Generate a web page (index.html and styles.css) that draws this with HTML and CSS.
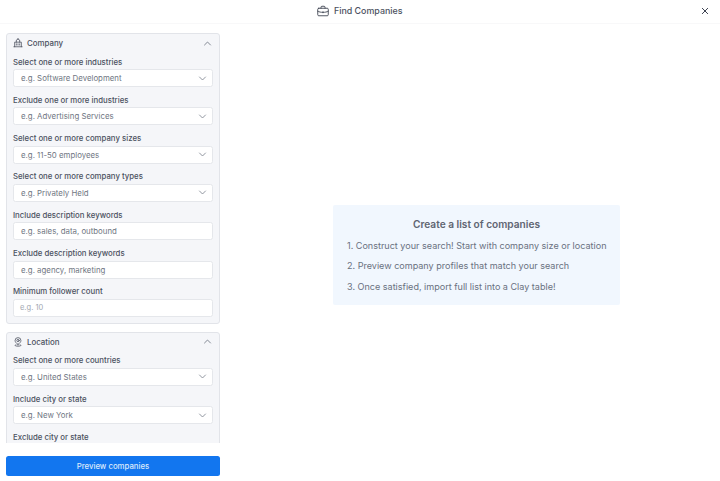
FILE: index.html
```html
<!DOCTYPE html>
<html lang="en">
<head>
<meta charset="utf-8">
<title>Find Companies</title>
<link rel="stylesheet" href="styles.css">
</head>
<body>
<div class="app">
  <header class="topbar">
    <div class="title">
      <svg class="title-icon" viewBox="0 0 24 24" fill="none" stroke="currentColor" stroke-width="1.800" stroke-linejoin="round" stroke-linecap="round"><rect x="1.500" y="6.500" width="21" height="15" rx="2"/><path d="M8 6.500V4.500a2 2 0 0 1 2-2h4a2 2 0 0 1 2 2v2"/><path d="M1.500 12.500c3 1.600 6.500 2.200 10.500 2.200s7.500-.6 10.500-2.200"/><path d="M12 13.500v2"/></svg>
      <span>Find Companies</span>
    </div>
    <button class="close" aria-label="Close"><svg viewBox="0 0 12 12" fill="none" stroke="currentColor" stroke-width="1.500" stroke-linecap="round"><path d="M2 2l8 8M10 2l-8 8"/></svg></button>
  </header>
  <main class="content">
    <aside class="sidebar">
      <div class="scroll">
        <section class="card">
          <div class="card-head">
            <svg class="card-icon" viewBox="0 0 24 24" fill="none" stroke="currentColor" stroke-width="1.800" stroke-linejoin="round" stroke-linecap="round"><path d="M2 21h20"/><path d="M4 21V10h16v11"/><path d="M8 10V5l4-2.500L16 5v5"/><path d="M12 2.500V1"/><path d="M8 14v3M12 14v3M16 14v3"/></svg>
            <span class="card-title">Company</span>
            <svg class="chev-up" viewBox="0 0 12 12" fill="none" stroke="currentColor" stroke-width="1.100" stroke-linecap="round" stroke-linejoin="round"><path d="M2 8l4-4 4 4"/></svg>
          </div>
          <div class="field"><label>Select one or more industries</label><div class="control"><span>e.g. Software Development</span><svg class="chev" viewBox="0 0 12 12" fill="none" stroke="currentColor" stroke-width="1.100" stroke-linecap="round" stroke-linejoin="round"><path d="M2 4l4 4 4-4"/></svg></div></div>
          <div class="field"><label>Exclude one or more industries</label><div class="control"><span>e.g. Advertising Services</span><svg class="chev" viewBox="0 0 12 12" fill="none" stroke="currentColor" stroke-width="1.100" stroke-linecap="round" stroke-linejoin="round"><path d="M2 4l4 4 4-4"/></svg></div></div>
          <div class="field"><label>Select one or more company sizes</label><div class="control"><span>e.g. 11-50 employees</span><svg class="chev" viewBox="0 0 12 12" fill="none" stroke="currentColor" stroke-width="1.100" stroke-linecap="round" stroke-linejoin="round"><path d="M2 4l4 4 4-4"/></svg></div></div>
          <div class="field"><label>Select one or more company types</label><div class="control"><span>e.g. Privately Held</span><svg class="chev" viewBox="0 0 12 12" fill="none" stroke="currentColor" stroke-width="1.100" stroke-linecap="round" stroke-linejoin="round"><path d="M2 4l4 4 4-4"/></svg></div></div>
          <div class="field"><label>Include description keywords</label><div class="control"><span>e.g. sales, data, outbound</span></div></div>
          <div class="field"><label>Exclude description keywords</label><div class="control"><span>e.g. agency, marketing</span></div></div>
          <div class="field"><label>Minimum follower count</label><div class="control number"><span>e.g. 10</span></div></div>
        </section>
        <section class="card">
          <div class="card-head">
            <svg class="card-icon" viewBox="0 0 24 24" fill="none" stroke="currentColor" stroke-width="1.800" stroke-linejoin="round" stroke-linecap="round"><path d="M12 18c-4-3-7-6-7-9.500a7 7 0 0 1 14 0C19 12 16 15 12 18z"/><circle cx="12" cy="8.500" r="2.800"/><path d="M7 18.500c-1.500.5-2 1-2 1.500 0 1.200 3 2 7 2s7-.8 7-2c0-.5-.5-1-2-1.500"/></svg>
            <span class="card-title">Location</span>
            <svg class="chev-up" viewBox="0 0 12 12" fill="none" stroke="currentColor" stroke-width="1.100" stroke-linecap="round" stroke-linejoin="round"><path d="M2 8l4-4 4 4"/></svg>
          </div>
          <div class="field"><label>Select one or more countries</label><div class="control"><span>e.g. United States</span><svg class="chev" viewBox="0 0 12 12" fill="none" stroke="currentColor" stroke-width="1.100" stroke-linecap="round" stroke-linejoin="round"><path d="M2 4l4 4 4-4"/></svg></div></div>
          <div class="field"><label>Include city or state</label><div class="control"><span>e.g. New York</span><svg class="chev" viewBox="0 0 12 12" fill="none" stroke="currentColor" stroke-width="1.100" stroke-linecap="round" stroke-linejoin="round"><path d="M2 4l4 4 4-4"/></svg></div></div>
          <div class="field"><label>Exclude city or state</label></div>
        </section>
      </div>
      <button class="preview">Preview companies</button>
    </aside>
    <div class="stage">
      <div class="intro">
        <h2>Create a list of companies</h2>
        <p>1. Construct your search! Start with company size or location</p>
        <p>2. Preview company profiles that match your search</p>
        <p>3. Once satisfied, import full list into a Clay table!</p>
      </div>
    </div>
  </main>
</div>
</body>
</html>
```
FILE: styles.css
```css
* { box-sizing: border-box; }
html, body { margin: 0; height: 100%; overflow: hidden; background: #fff; }
body { font-family: Inter, "Liberation Sans", sans-serif; color: #4b5563; }
.app { width: 720px; height: 481px; display: flex; flex-direction: column; }
.topbar { height: 24px; flex: none; display: flex; align-items: center; justify-content: center; position: relative; border-bottom: 1px solid #f8f8f9; padding-bottom: 2px; }
.title { display: flex; align-items: center; gap: 4.500px; font-size: 8.900px; font-weight: 500; color: #4b5160; }
.title-icon { width: 12px; height: 12px; color: #3f4552; }
.close { position: absolute; right: 10px; top: 6px; width: 10px; height: 10px; padding: 1px; border: 0; background: none; color: #3b4150; display: flex; }
.close svg { width: 8px; height: 8px; }
.content { flex: 1; display: flex; min-height: 0; }
.sidebar { width: 226px; flex: none; padding: 9px 0 5px 6px; display: flex; flex-direction: column; }
.scroll { flex: none; height: 409.500px; overflow: hidden; display: flex; flex-direction: column; gap: 8px; }
.card { flex: none; width: 214px; background: #f5f6f9; border: 1px solid #e2e4e9; border-radius: 3px; padding: 0 6px 1.700px; }
.card-head { height: 19px; padding-bottom: 1px; display: flex; align-items: center; gap: 4px; color: #444a58; }
.card-icon { width: 10px; height: 10px; flex: none; }
.card-title { font-size: 7.900px; font-weight: 500; flex: 1; color: #4b5160; }
.chev-up { width: 9px; height: 9px; color: #6b7280; flex: none; margin-right: 1px; }
.field { display: flex; flex-direction: column; height: 38.330px; padding-top: 3.500px; }
.field label { font-size: 7.800px; font-weight: 500; color: #4b5160; line-height: 10px; height: 10px; margin-bottom: 2.500px; white-space: nowrap; }
.control { height: 18px; flex: none; background: #fff; border: 1px solid #e5e7eb; border-radius: 2.500px; display: flex; align-items: center; justify-content: space-between; padding: 0 7px; font-size: 7.850px; color: #6f7682; }
.control.number { color: #a3a8b2; padding-left: 6px; font-size: 7.500px; }
.chev { width: 9px; height: 9px; color: #7b818d; flex: none; margin-right: -2px; }
.preview { flex: none; width: 214px; height: 20px; margin-top: 13.500px; background: #1276ef; color: #dbe9fb; border: 0; border-radius: 2.500px; font: 500 7.800px Inter, "Liberation Sans", sans-serif; }
.stage { flex: 1; display: flex; align-items: flex-start; justify-content: flex-start; padding: 181px 0 0 107px; }
.intro { width: 287px; height: 100px; background: #f1f7fe; border-radius: 2px; padding: 13px 14px 0; color: #6a7180; }
.intro h2 { margin: 0 0 9.500px; font-size: 10.150px; line-height: 12px; font-weight: 600; text-align: center; color: #5f6572; }
.intro p { margin: 0 0 9.500px; font-size: 9.050px; line-height: 11px; white-space: nowrap; }
```
